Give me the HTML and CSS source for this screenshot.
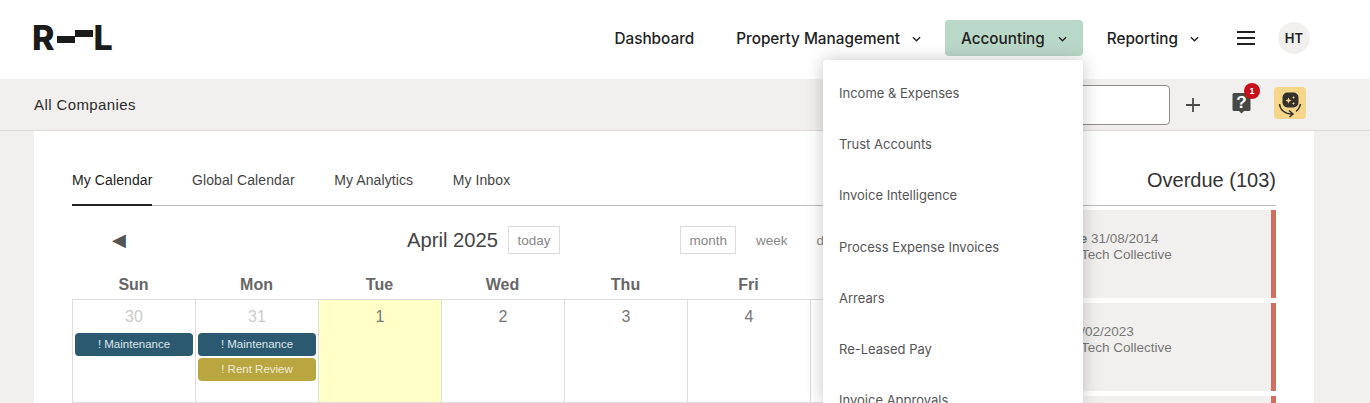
FILE: index.html
```html
<!DOCTYPE html>
<html lang="en">
<head>
<meta charset="utf-8">
<title>Calendar</title>
<link rel="stylesheet" href="styles.css">
</head>
<body>
<header class="topbar">
  <div class="logo"><span class="logo-letter">R</span><span class="logo-bar"></span><span class="logo-bar logo-bar-up"></span><span class="logo-letter logo-l">L</span></div>
  <nav class="nav">
    <a class="nav-item">Dashboard</a>
    <a class="nav-item has-menu">Property Management<svg class="chev" viewBox="0 0 10 6"><path d="M1 1l4 4 4-4"/></svg></a>
    <a class="nav-item has-menu active">Accounting<svg class="chev" viewBox="0 0 10 6"><path d="M1 1l4 4 4-4"/></svg></a>
    <a class="nav-item has-menu reporting">Reporting<svg class="chev" viewBox="0 0 10 6"><path d="M1 1l4 4 4-4"/></svg></a>
    <span class="burger"><i></i><i></i><i></i></span>
    <span class="avatar">HT</span>
  </nav>
</header>

<div class="subbar">
  <span class="company">All Companies</span>
  <div class="tools">
    <input class="search" type="text" aria-label="Search">
    <svg class="plus" viewBox="0 0 14 14"><path d="M7 0v14M0 7h14"/></svg>
    <span class="help">
      <svg viewBox="0 0 19 22" class="help-icon"><path class="help-bg" d="M2 1h15a1.500 1.500 0 0 1 1.500 1.500v15a1.500 1.500 0 0 1-1.500 1.500h-5l-2.500 2.500L7 19H2a1.500 1.500 0 0 1-1.500-1.500v-15A1.500 1.500 0 0 1 2 1z"/><text x="9.500" y="16" class="help-q">?</text></svg>
      <span class="badge">1</span>
    </span>
    <span class="assist">
      <svg viewBox="0 0 32 32"><rect x="8.500" y="5.500" width="16" height="15" rx="5" class="a-blob"/><path class="a-star" d="M14.500 10.500l.9 2.100 2.100.9-2.100.9-.9 2.100-.9-2.100-2.100-.9 2.100-.9zM19.500 9l.5 1 1 .5-1 .5-.5 1-.5-1-1-.5 1-.5zM19.500 15l.5 1 1 .5-1 .5-.5 1-.5-1-1-.5 1-.5z"/><path class="a-ring" d="M5.500 17c.5 6 5.500 10 12.500 10M26.500 17c-.5 3-2 5.500-4.500 7.500M15 23.500l4 3.500-3.500 3"/></svg>
    </span>
  </div>
</div>

<main class="page">
  <section class="card">
    <div class="tabs">
      <a class="tab current">My Calendar</a>
      <a class="tab">Global Calendar</a>
      <a class="tab">My Analytics</a>
      <a class="tab">My Inbox</a>
      <h2 class="overdue-title">Overdue (103)</h2>
    </div>
    <div class="content">
      <div class="calendar">
        <div class="cal-toolbar">
          <span class="prev">◀</span>
          <h1 class="month-title">April 2025</h1>
          <button class="cal-btn">today</button>
          <button class="cal-btn month-btn">month</button>
          <button class="cal-btn plain">week</button>
          <button class="cal-btn plain">day</button>
        </div>
        <div class="dow"><span>Sun</span><span>Mon</span><span>Tue</span><span>Wed</span><span>Thu</span><span>Fri</span><span>Sat</span></div>
        <div class="grid">
          <div class="cell muted"><span class="num">30</span><span class="event blue">! Maintenance</span></div>
          <div class="cell muted"><span class="num">31</span><span class="event blue">! Maintenance</span><span class="event gold">! Rent Review</span></div>
          <div class="cell today"><span class="num">1</span></div>
          <div class="cell"><span class="num">2</span></div>
          <div class="cell"><span class="num">3</span></div>
          <div class="cell"><span class="num">4</span></div>
          <div class="cell"><span class="num">5</span></div>
        </div>
      </div>
      <aside class="overdue">
        <div class="due-item"><p><b>Date</b> 31/08/2014</p><p>Big Tech Collective</p></div>
        <div class="due-item"><p><b>-</b> 16/02/2023</p><p>Big Tech Collective</p></div>
        <div class="due-item"><p><b>-</b> 16/02/2023</p><p>Big Tech Collective</p></div>
      </aside>
    </div>
  </section>
</main>

<ul class="dropdown">
  <li>Income &amp; Expenses</li>
  <li>Trust Accounts</li>
  <li>Invoice Intelligence</li>
  <li>Process Expense Invoices</li>
  <li>Arrears</li>
  <li>Re-Leased Pay</li>
  <li>Invoice Approvals</li>
</ul>
</body>
</html>
```
FILE: styles.css
```css
* { box-sizing: border-box; }
html, body { margin: 0; height: 403px; overflow: hidden; }
body { font-family: "Liberation Sans", Arial, sans-serif; color: #222; background: #f1f0ee; position: relative; }
h1, h2, p, ul { margin: 0; padding: 0; font-weight: 400; }

.topbar { height: 79px; background: #fff; display: flex; align-items: center; justify-content: space-between; padding: 0 60px 3px 32px; }
.logo { display: flex; align-items: center; height: 24px; color: #1b1b1b; }
.logo-letter { font: 800 34px/24px Inter, sans-serif; }
.logo-bar { width: 18px; height: 7px; background: #1b1b1b; margin: 3px 0 0 2px; }
.logo-bar-up { margin: -10px 0 0 0; }
.logo-l { margin-left: 1px; }

.nav { display: flex; align-items: center; font: 450 15.300px/20px Inter, sans-serif; color: #222; }
.nav-item { display: flex; align-items: center; height: 36px; padding-top: 2px; }
.has-menu { margin-left: 42px; }
.chev { width: 9px; height: 6px; margin-left: 12px; fill: none; stroke: #222; stroke-width: 1.500; }
.active { background: #bad8c8; border-radius: 4px; padding: 2px 16px 0; margin-left: 24px; }
.active .chev { margin-left: 13px; }
.reporting { margin-left: 24px; }
.burger { display: flex; flex-direction: column; gap: 4px; width: 18px; margin-left: 38px; }
.burger i { display: block; height: 2px; background: #222; }
.avatar { width: 32px; height: 32px; border-radius: 50%; background: #f1f0ee; margin-left: 23px; display: flex; align-items: center; justify-content: center; font-size: 13px; font-weight: 600; }

.subbar { height: 52px; border-bottom: 1px solid #dcdbd8; display: flex; align-items: center; justify-content: space-between; padding: 0 64px 0 34px; }
.company { font-size: 15px; letter-spacing: .4px; color: #2b2b2b; }
.tools { display: flex; align-items: center; }
.search { width: 300px; height: 40px; border: 1px solid #8e8d88; border-radius: 4px; background: #fff; }
.plus { width: 14px; height: 14px; margin-left: 16px; fill: none; stroke: #4a4a46; stroke-width: 1.800; }
.help { position: relative; width: 19px; height: 22px; margin: -3px 0 0 32px; }
.help-icon { display: block; width: 19px; height: 22px; }
.help-bg { fill: #484845; }
.help-q { fill: #fff; font: 700 17px "Liberation Sans", sans-serif; text-anchor: middle; }
.badge { position: absolute; top: -9px; right: -9px; width: 16px; height: 16px; border-radius: 50%; background: #c8101c; color: #fff; font-size: 9px; font-weight: 700; line-height: 16px; text-align: center; }
.assist { width: 32px; height: 32px; margin: -3px 0 0 23px; background: #f6d789; border-radius: 4px; }
.assist svg { display: block; width: 32px; height: 32px; }
.a-blob { fill: #33312c; }
.a-star { fill: #f6d789; }
.a-ring { fill: none; stroke: #33312c; stroke-width: 1.500; }

.page { padding: 0 56px 0 34px; }
.card { background: #fff; padding: 0 38px; height: 300px; }
.tabs { display: flex; align-items: flex-end; height: 75px; border-bottom: 1px solid #bdbcb8; gap: 39.500px; font-size: 14px; letter-spacing: .1px; color: #444; }
.tab { height: 35px; line-height: 20px; }
.tab.current { color: #222; border-bottom: 2px solid #222; margin-bottom: -1px; height: 36px; }
.overdue-title { margin-left: auto; font-size: 20px; letter-spacing: 0; line-height: 24px; color: #333; align-self: flex-end; padding-bottom: 13px; }

.content { display: flex; gap: 20px; }
.calendar { width: 861px; flex: none; }
.cal-toolbar { display: flex; align-items: center; height: 68px; padding-left: 40px; }
.prev { font-size: 18px; color: #555; width: 15px; }
.month-title { font-size: 20.200px; color: #444; margin-left: 280px; }
.cal-btn { height: 28px; border: 1px solid #ddd; background: #fff; color: #888; font: 13.500px "Liberation Sans", sans-serif; padding: 0 8.500px; margin-left: 10px; }
.month-btn { margin-left: 120px; }
.plain { border-color: transparent; }
.dow { display: grid; grid-template-columns: repeat(7, 123px); height: 25px; font-size: 16px; font-weight: 700; color: #666; text-align: center; line-height: 22px; }
.grid { display: grid; grid-template-columns: repeat(7, 123px); border-top: 1px solid #ddd; border-left: 1px solid #ddd; }
.cell { height: 103px; border-right: 1px solid #ddd; border-bottom: 1px solid #ddd; padding: 0 2px; display: flex; flex-direction: column; gap: 2px; }
.cell.today { background: #ffffc8; }
.num { display: block; height: 31px; padding-top: 8px; text-align: center; font-size: 16px; line-height: 18px; color: #777; }
.muted .num { color: #ccc; }
.event { display: block; height: 23px; line-height: 23px; border-radius: 4px; text-align: center; font-size: 11.500px; color: #dce6ea; }
.blue { background: #2a5970; }
.gold { background: #b9a640; color: #f0ecd6; }

.overdue { flex: 1; padding-top: 4px; display: flex; flex-direction: column; gap: 5px; }
.due-item { height: 88px; flex: none; background: #f1f0ee; border-right: 5px solid #d17060; padding: 21px 0 0 105px; font-size: 13.500px; line-height: 16px; color: #777; }

.dropdown { position: absolute; left: 823px; top: 60px; width: 260px; height: 343px; overflow: hidden; background: #fff; border-radius: 4px 4px 0 0; box-shadow: 0 0 18px rgba(0,0,0,.22); list-style: none; padding: 7.800px 16px 0; font: 13px Inter, sans-serif; color: #555; }
.dropdown li { height: 51.250px; line-height: 51px; }
```
